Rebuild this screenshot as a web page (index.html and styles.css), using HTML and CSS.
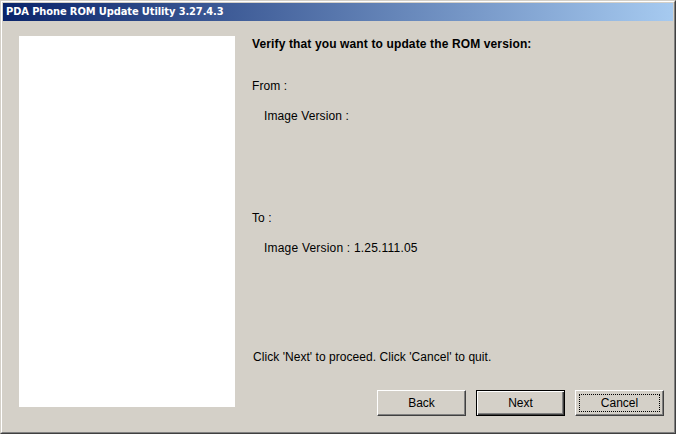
FILE: index.html
```html
<!DOCTYPE html>
<html lang="en">
<head>
    <meta charset="UTF-8">
    <meta name="viewport" content="width=device-width, initial-scale=1.0">
    <title>PDA Phone ROM Update Utility</title>
    <link rel="stylesheet" href="styles.css">
</head>
<body>
    <div class="window">
        <div class="frame">
            <!-- Title bar -->
            <div class="titlebar">PDA Phone ROM Update Utility 3.27.4.3</div>

            <div class="main">
                <div class="side-panel"></div>

                <div class="pane">
                    <p class="heading">Verify that you want to update the ROM version:</p>
                    <p class="label from">From :</p>
                    <p class="label indent image-from">Image Version :</p>
                    <p class="label to">To :</p>
                    <p class="label indent image-to">Image Version : 1.25.111.05</p>
                    <p class="label hint">Click 'Next' to proceed. Click 'Cancel' to quit.</p>

                    <div class="buttons">
                        <button class="btn">Back</button>
                        <button class="btn btn-default">Next</button>
                        <button class="btn btn-focus"><span>Cancel</span></button>
                    </div>
                </div>
            </div>
        </div>
    </div>
</body>
</html>
```

FILE: styles.css
```css
html, body {
    margin: 0;
    padding: 0;
    background-color: #d4d0c8;
}

body {
    font-family: "Liberation Sans", Arial, sans-serif;
    font-size: 12px;
    color: #000;
}

.window {
    width: 676px;
    height: 434px;
    box-sizing: border-box;
    border: 1px solid;
    border-color: #d4d0c8 #404040 #404040 #d4d0c8;
    background-color: #d4d0c8;
}

.frame {
    height: 100%;
    box-sizing: border-box;
    border: 1px solid;
    border-color: #fff #808080 #808080 #fff;
    padding: 1px;
    display: flex;
    flex-direction: column;
}

.titlebar {
    height: 18px;
    line-height: 18px;
    padding-left: 3px;
    background: linear-gradient(to right, #0a246a, #a6caf0);
    color: #fff;
    font-family: "DejaVu Sans Condensed", "DejaVu Sans", Tahoma, sans-serif;
    font-weight: bold;
    font-size: 11px;
    letter-spacing: -0.1px;
    white-space: nowrap;
}

.main {
    flex: 1;
    display: flex;
    padding: 15px 0 0 16px;
}

.side-panel {
    width: 216px;
    height: 371px;
    background-color: #fff;
}

.pane {
    flex: 1;
    display: flex;
    flex-direction: column;
    margin-left: 17px;
    padding-right: 9px;
}

.pane p {
    margin: 0;
    line-height: 14px;
    white-space: nowrap;
    letter-spacing: 0.1px;
}

.pane p.heading {
    margin-top: 1px;
    font-weight: bold;
    font-size: 12px;
    letter-spacing: 0.13px;
}

.pane p.from { margin-top: 28px; }
.pane p.image-from { margin-top: 16px; }
.pane p.to { margin-top: 88px; }
.pane p.image-to { margin-top: 16px; letter-spacing: 0.2px; }
.pane p.hint { margin-top: 95px; padding-left: 1px; letter-spacing: 0.05px; }

.indent {
    padding-left: 12px;
}

.buttons {
    display: flex;
    justify-content: flex-end;
    gap: 10px;
    margin-top: 26px;
}

.btn {
    width: 89px;
    height: 26px;
    padding: 0;
    font-family: "Liberation Sans", Arial, sans-serif;
    font-size: 12px;
    color: #000;
    background-color: #d4d0c8;
    border: 1px solid;
    border-color: #fff #404040 #404040 #fff;
    box-shadow: inset -1px -1px 0 #808080, inset 1px 1px 0 #d4d0c8;
}

.btn-default {
    border: 1px solid #000;
    box-shadow: inset 1px 1px 0 #fff, inset -1px -1px 0 #404040, inset -2px -2px 0 #808080;
}

.btn-focus {
    position: relative;
}

.btn-focus::after {
    content: "";
    position: absolute;
    left: 3px;
    top: 3px;
    right: 3px;
    bottom: 3px;
    border: 1px dotted #000;
}
```
